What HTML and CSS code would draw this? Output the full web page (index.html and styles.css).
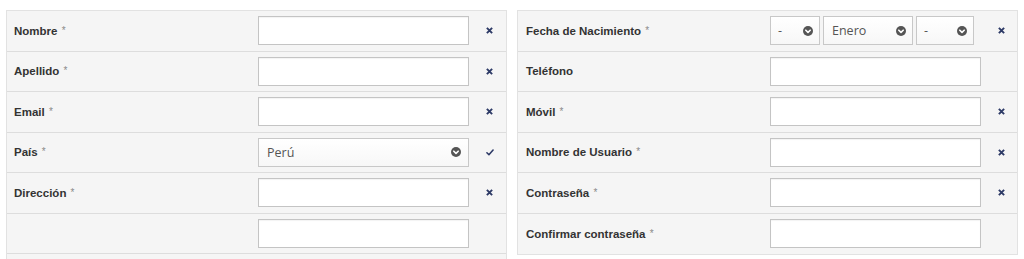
FILE: index.html
```html
<!DOCTYPE html>
<html lang="es">
<head>
<meta charset="utf-8">
<title>Registro</title>
<link rel="stylesheet" href="styles.css">
</head>
<body>
<div class="page">
  <div class="panel panel-left">
    <div class="row">
      <label class="lbl">Nombre <span class="req">*</span></label>
      <div class="field"><div class="input"></div></div>
      <div class="status"><svg class="ico-x" viewBox="0 0 8 8"><path d="M1 1L7 7M7 1L1 7"/></svg></div>
    </div>
    <div class="row">
      <label class="lbl">Apellido <span class="req">*</span></label>
      <div class="field"><div class="input"></div></div>
      <div class="status"><svg class="ico-x" viewBox="0 0 8 8"><path d="M1 1L7 7M7 1L1 7"/></svg></div>
    </div>
    <div class="row">
      <label class="lbl">Email <span class="req">*</span></label>
      <div class="field"><div class="input"></div></div>
      <div class="status"><svg class="ico-x" viewBox="0 0 8 8"><path d="M1 1L7 7M7 1L1 7"/></svg></div>
    </div>
    <div class="row">
      <label class="lbl">País <span class="req">*</span></label>
      <div class="field">
        <div class="select select-full"><span class="val">Perú</span><span class="caret"><svg viewBox="0 0 10 10"><path d="M2.8 4.2L5 6.4L7.2 4.2"/></svg></span></div>
      </div>
      <div class="status"><svg class="ico-ok" viewBox="0 0 9 8"><path d="M1 4.3L3.3 6.6L8 1.2"/></svg></div>
    </div>
    <div class="row">
      <label class="lbl">Dirección <span class="req">*</span></label>
      <div class="field"><div class="input"></div></div>
      <div class="status"><svg class="ico-x" viewBox="0 0 8 8"><path d="M1 1L7 7M7 1L1 7"/></svg></div>
    </div>
    <div class="row">
      <label class="lbl"></label>
      <div class="field"><div class="input"></div></div>
      <div class="status"></div>
    </div>
  </div>

  <div class="panel panel-right">
    <div class="row">
      <label class="lbl">Fecha de Nacimiento <span class="req">*</span></label>
      <div class="field date">
        <div class="select sel-day"><span class="val">-</span><span class="caret"><svg viewBox="0 0 10 10"><path d="M2.8 4.2L5 6.4L7.2 4.2"/></svg></span></div>
        <div class="select sel-month"><span class="val">Enero</span><span class="caret"><svg viewBox="0 0 10 10"><path d="M2.8 4.2L5 6.4L7.2 4.2"/></svg></span></div>
        <div class="select sel-year"><span class="val">-</span><span class="caret"><svg viewBox="0 0 10 10"><path d="M2.8 4.2L5 6.4L7.2 4.2"/></svg></span></div>
      </div>
      <div class="status"><svg class="ico-x" viewBox="0 0 8 8"><path d="M1 1L7 7M7 1L1 7"/></svg></div>
    </div>
    <div class="row">
      <label class="lbl">Teléfono</label>
      <div class="field"><div class="input"></div></div>
      <div class="status"></div>
    </div>
    <div class="row">
      <label class="lbl">Móvil <span class="req">*</span></label>
      <div class="field"><div class="input"></div></div>
      <div class="status"><svg class="ico-x" viewBox="0 0 8 8"><path d="M1 1L7 7M7 1L1 7"/></svg></div>
    </div>
    <div class="row">
      <label class="lbl">Nombre de Usuario <span class="req">*</span></label>
      <div class="field"><div class="input"></div></div>
      <div class="status"><svg class="ico-x" viewBox="0 0 8 8"><path d="M1 1L7 7M7 1L1 7"/></svg></div>
    </div>
    <div class="row">
      <label class="lbl">Contraseña <span class="req">*</span></label>
      <div class="field"><div class="input"></div></div>
      <div class="status"><svg class="ico-x" viewBox="0 0 8 8"><path d="M1 1L7 7M7 1L1 7"/></svg></div>
    </div>
    <div class="row">
      <label class="lbl">Confirmar contraseña <span class="req">*</span></label>
      <div class="field"><div class="input"></div></div>
      <div class="status"></div>
    </div>
  </div>
</div>
</body>
</html>
```

FILE: styles.css
```css
* { box-sizing: border-box; }

html, body {
  margin: 0;
  padding: 0;
  background: #ffffff;
  overflow: hidden;
}

body {
  font-family: "Liberation Sans", Arial, sans-serif;
  color: #333333;
}

.page {
  display: grid;
  grid-template-columns: 501px 501px;
  column-gap: 10px;
  padding: 10px 6px 0 6px;
  align-items: start;
}

.panel {
  background: #f5f5f5;
  border: 1px solid #e2e2e2;
  border-bottom: none;
}

.panel-left {
  padding-bottom: 5px;
}

.panel-right {
  border-bottom: 1px solid #e2e2e2;
}

.row {
  display: grid;
  grid-template-columns: 251px 211px 1fr;
  align-items: center;
  height: 40.5px;
  border-bottom: 1px solid #dddddd;
}

.panel-right .row {
  grid-template-columns: 252px 211px 1fr;
}

.panel-right .row:last-child {
  border-bottom: none;
  height: 40px;
}

.lbl {
  padding-left: 7px;
  font-size: 11.5px;
  font-weight: bold;
  color: #333333;
  white-space: nowrap;
}

.panel-right .lbl {
  padding-left: 8px;
}

.req {
  font-weight: normal;
  color: #8a8a8a;
  font-size: 10px;
  position: relative;
  top: -1px;
  margin-left: 1px;
}

.field {
  display: flex;
  align-items: center;
}

.input {
  width: 211px;
  height: 29px;
  background: #ffffff;
  border: 1px solid #c4c4c4;
  box-shadow: inset 0 1px 1px rgba(0,0,0,0.05);
}

.select {
  height: 29px;
  background: linear-gradient(#ffffff, #f7f7f7);
  border: 1px solid #c8c8c8;
  display: flex;
  align-items: center;
  justify-content: space-between;
  padding: 0 6px 0 7px;
  font-family: "Open Sans", "Liberation Sans", sans-serif;
  font-size: 12.5px;
  color: #555555;
}

.select-full {
  width: 211px;
  padding-left: 8px;
  padding-right: 7px;
}

.date {
  gap: 3px;
}

.sel-day { width: 50px; }
.sel-month { width: 90px; padding-left: 8px; }
.sel-year { width: 58px; padding-left: 7px; }

.caret {
  width: 10px;
  height: 10px;
  border-radius: 50%;
  background: #555555;
  display: flex;
}

.caret svg {
  width: 10px;
  height: 10px;
  fill: none;
  stroke: #ffffff;
  stroke-width: 1.6;
  stroke-linecap: round;
  stroke-linejoin: round;
}

.status {
  display: flex;
  justify-content: center;
  padding-left: 4px;
}

.ico-x {
  width: 7px;
  height: 7px;
  fill: none;
  stroke: #2d3a66;
  stroke-width: 2.2;
  stroke-linecap: butt;
}

.ico-ok {
  width: 8px;
  height: 7px;
  fill: none;
  stroke: #2d3a66;
  stroke-width: 1.8;
  stroke-linecap: round;
  stroke-linejoin: round;
}
```
